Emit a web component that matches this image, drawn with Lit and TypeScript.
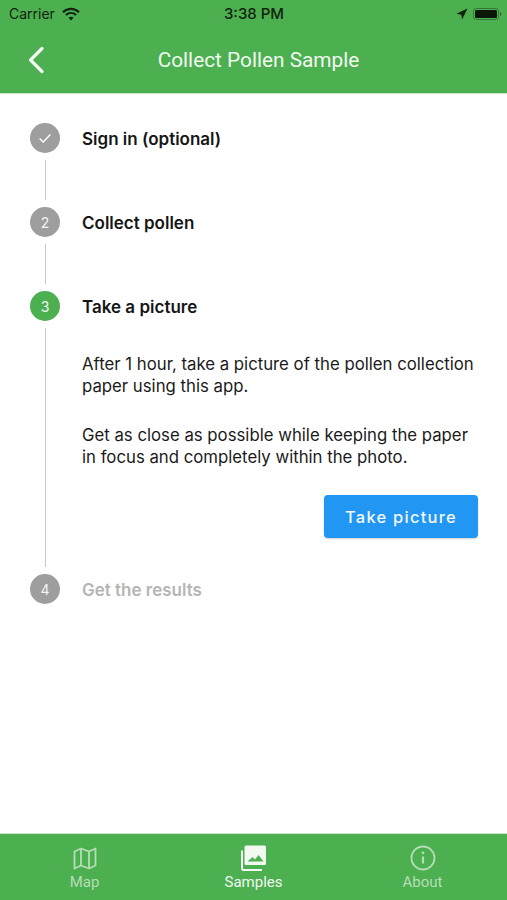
import { LitElement, html, css, nothing, svg } from "lit";
import { customElement } from "lit/decorators.js";

type Step = { n: string; title: string; state: "done" | "idle" | "active" | "disabled"; tall?: boolean };

const STEPS: Step[] = [
  { n: "check", title: "Sign in (optional)", state: "done" },
  { n: "2", title: "Collect pollen", state: "idle" },
  { n: "3", title: "Take a picture", state: "active", tall: true },
  { n: "4", title: "Get the results", state: "disabled" },
];

const checkIcon = svg`<svg class="check" viewBox="0 0 16 16" width="16" height="16"><path d="M2.6 8.6 6.2 12 13.4 4.4" fill="none" stroke="#fff" stroke-width="1.4"/></svg>`;

@customElement("app-root")
export class AppRoot extends LitElement {
  static styles = css`
    :host {
      display: flex;
      flex-direction: column;
      width: 507px;
      height: 900px;
      background: #fff;
      font-family: Inter, Roboto, "Liberation Sans", sans-serif;
      color: #111;
      overflow: hidden;
    }
    .top {
      background: #4caf50;
      height: 94px;
      display: flex;
      flex-direction: column;
      border-bottom: 1px solid #c9e6ca;
      box-sizing: border-box;
      flex: none;
    }
    .status {
      height: 27px;
      display: grid;
      grid-template-columns: 1fr auto 1fr;
      align-items: center;
      padding: 0 5px 0 9px;
      font-size: 14px;
      color: #12240f;
    }
    .status .left {
      display: flex;
      align-items: center;
      gap: 7px;
    }
    .status .time {
      font-weight: 500;
      font-size: 15px;
      margin-right: 3px;
    }
    .status .right {
      display: flex;
      justify-content: flex-end;
      align-items: center;
      gap: 5px;
    }
    .bar {
      flex: 1;
      display: grid;
      grid-template-columns: 1fr auto 1fr;
      align-items: center;
      padding: 0 27px;
    }
    .bar .title {
      color: #f1f9f1;
      font-size: 20.8px;
      font-weight: 400;
      font-family: Roboto, Inter, sans-serif;
      margin-left: 10px;
    }
    .back {
      display: block;
    }
    .stepper {
      flex: 1;
      padding: 29px 29px 0 30px;
    }
    .step {
      display: grid;
      grid-template-columns: 30px 1fr;
      column-gap: 22px;
    }
    .circle {
      width: 30px;
      height: 30px;
      border-radius: 50%;
      background: #9e9e9e;
      color: #f4f4f4;
      font-size: 14px;
      display: flex;
      align-items: center;
      justify-content: center;
    }
    .circle.active {
      background: #4caf50;
    }
    .label {
      font-size: 17px;
      font-weight: 600;
      line-height: 32px;
      color: #161616;
    }
    .label.disabled {
      color: #b5b5b5;
    }
    .rail {
      display: flex;
      justify-content: center;
      padding: 5px 0 7px;
      min-height: 40px;
    }
    .rail i {
      display: block;
      width: 1px;
      background: #c8c8c8;
    }
    .content {
      padding-top: 30px;
      font-size: 16.75px;
      line-height: 22px;
      color: #1a1a1a;
    }
    .content p {
      margin: 0 0 27px;
    }
    .actions {
      display: flex;
      justify-content: flex-end;
    }
    .spacer {
      height: 36px;
    }
    button {
      width: 154px;
      height: 43px;
      border: none;
      border-radius: 4px;
      background: #2196f3;
      color: #f2f8fe;
      font: 500 16.5px Inter, Roboto, sans-serif;
      letter-spacing: 1.25px;
      box-shadow: 0 1px 2px rgba(0, 0, 0, 0.18);
    }
    .tabs {
      flex: none;
      height: 66px;
      background: #4caf50;
      border-top: 1px solid #c9e6ca;
      display: grid;
      grid-template-columns: repeat(3, 1fr);
    }
    .tab {
      display: flex;
      flex-direction: column;
      align-items: center;
      padding-top: 11px;
      gap: 2px;
      font-size: 15px;
      line-height: 18px;
      color: #b5deb7;
      font-family: Roboto, Inter, sans-serif;
    }
    .tab.on {
      color: #f1f9f1;
    }
    .tab svg {
      display: block;
    }
  `;

  private renderStep(s: Step, last: boolean) {
    const circle = s.n === "check" ? checkIcon : s.n;
    return html`
      <div class="step">
        <div class="circle ${s.state === "active" ? "active" : ""}">${circle}</div>
        <div class="label ${s.state === "disabled" ? "disabled" : ""}">${s.title}</div>
        ${last
          ? nothing
          : html`
              <div class="rail"><i></i></div>
              <div>${s.tall ? this.renderContent() : nothing}</div>
            `}
      </div>
    `;
  }

  private renderContent() {
    return html`
      <div class="content">
        <p>After 1 hour, take a picture of the pollen collection paper using this app.</p>
        <p>Get as close as possible while keeping the paper in focus and completely within the photo.</p>
        <div class="actions"><button>Take picture</button></div>
        <div class="spacer"></div>
      </div>
    `;
  }

  render() {
    return html`
      <div class="top">
        <div class="status">
          <div class="left">
            <span>Carrier</span>
            <svg width="18" height="14" viewBox="0 0 18 14">
              <path d="M1 5.2C5.6.8 12.4.8 17 5.2" fill="none" stroke="#12240f" stroke-width="2.2"/>
              <path d="M3.9 8C6.9 5.3 11.1 5.3 14.1 8" fill="none" stroke="#12240f" stroke-width="2.2"/>
              <path d="M6.4 10.6 9 13.4l2.6-2.8C10 9.3 8 9.3 6.4 10.6Z" fill="#12240f"/>
            </svg>
          </div>
          <div class="time">3:38 PM</div>
          <div class="right">
            <svg width="12" height="12" viewBox="0 0 11 11"><path d="M10.5.5 5.6 10.5 4.8 6.2.5 5.2Z" fill="#12240f"/></svg>
            <svg width="29" height="14" viewBox="0 0 29 14">
              <rect x=".5" y="1.5" width="25" height="11" rx="3" fill="none" stroke="#12240f" stroke-opacity=".4"/>
              <rect x="2" y="3" width="22" height="8" rx="1.6" fill="#0b160a"/>
              <path d="M27 5v4c.8-.3 1.3-1.1 1.3-2s-.5-1.7-1.3-2Z" fill="#12240f" fill-opacity=".5"/>
            </svg>
          </div>
        </div>
        <div class="bar">
          <svg class="back" width="18" height="28" viewBox="0 0 18 28">
            <path d="M15 2.5 3.5 14 15 25.5" fill="none" stroke="#f4faf4" stroke-width="3.2" stroke-linecap="round" stroke-linejoin="round"/>
          </svg>
          <div class="title">Collect Pollen Sample</div>
        </div>
      </div>
      <div class="stepper">
        ${STEPS.map((s, i) => this.renderStep(s, i === STEPS.length - 1))}
      </div>
      <div class="tabs">
        <div class="tab">
          <svg width="26" height="26" viewBox="-1 -1 26 26" fill="none" stroke="currentColor" stroke-width="1.8" stroke-linejoin="round">
            <path d="M1.5 5.5 8 2.5l8 3 6.5-3v17l-6.5 3-8-3-6.5 3Z"/>
            <path d="M8 2.5v17M16 5.5v17"/>
          </svg>
          <span>Map</span>
        </div>
        <div class="tab on">
          <svg width="26" height="26" viewBox="0 0 26 26">
            <path d="M5 .5h18.5A1.5 1.5 0 0 1 25 2v16.5a1.5 1.5 0 0 1-1.5 1.5H5a1.5 1.5 0 0 1-1.5-1.5V2A1.5 1.5 0 0 1 5 .5Z" fill="currentColor"/>
            <path d="M6.5 16.5h16l-5-6.500-3.500 4.500-2.500-2.500Z" fill="#4caf50"/>
            <path d="M1 5.5v17.7A1.800 1.800 0 0 0 2.800 25H21" fill="none" stroke="currentColor" stroke-width="2"/>
          </svg>
          <span>Samples</span>
        </div>
        <div class="tab">
          <svg width="26" height="26" viewBox="0 0 26 26" fill="none" stroke="currentColor">
            <circle cx="13" cy="13" r="11.5" stroke-width="1.8"/>
            <path d="M13 11.5v7" stroke-width="2.2"/>
            <circle cx="13" cy="7.8" r="1.4" fill="currentColor" stroke="none"/>
          </svg>
          <span>About</span>
        </div>
      </div>
    `;
  }
}
